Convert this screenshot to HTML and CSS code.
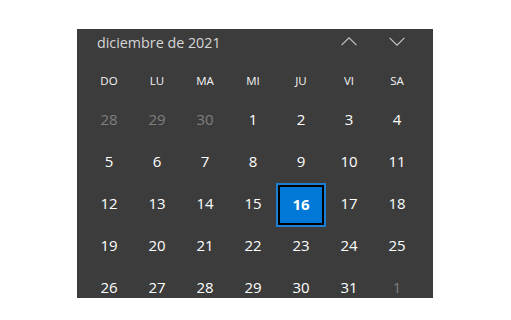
FILE: index.html
```html
<!DOCTYPE html>
<html lang="es">
<head>
<meta charset="utf-8">
<title>Calendario</title>
<link rel="stylesheet" href="styles.css">
</head>
<body>
<div class="page">
  <div class="calendar">
    <div class="header">
      <span class="title">diciembre de 2021</span>
      <div class="nav">
        <button class="nav-btn" aria-label="Mes anterior">
          <svg width="16" height="9" viewBox="0 0 16 9"><polyline points="0.6,8.2 8,0.8 15.4,8.2" fill="none" stroke="#c9c9c9" stroke-width="1.1"/></svg>
        </button>
        <button class="nav-btn" aria-label="Mes siguiente">
          <svg width="16" height="9" viewBox="0 0 16 9"><polyline points="0.6,0.8 8,8.2 15.4,0.8" fill="none" stroke="#c9c9c9" stroke-width="1.1"/></svg>
        </button>
      </div>
    </div>
    <div class="grid weekdays">
      <span>DO</span><span>LU</span><span>MA</span><span>MI</span><span>JU</span><span>VI</span><span>SA</span>
    </div>
    <div class="grid days">
      <span class="day out">28</span><span class="day out">29</span><span class="day out">30</span><span class="day">1</span><span class="day">2</span><span class="day">3</span><span class="day">4</span>
      <span class="day">5</span><span class="day">6</span><span class="day">7</span><span class="day">8</span><span class="day">9</span><span class="day">10</span><span class="day">11</span>
      <span class="day">12</span><span class="day">13</span><span class="day">14</span><span class="day">15</span><span class="day today"><span class="today-box">16</span></span><span class="day">17</span><span class="day">18</span>
      <span class="day">19</span><span class="day">20</span><span class="day">21</span><span class="day">22</span><span class="day">23</span><span class="day">24</span><span class="day">25</span>
      <span class="day">26</span><span class="day">27</span><span class="day">28</span><span class="day">29</span><span class="day">30</span><span class="day">31</span><span class="day out">1</span>
    </div>
  </div>
</div>
</body>
</html>
```
FILE: styles.css
```css
html, body {
  margin: 0;
  padding: 0;
  background: #ffffff;
}

.page {
  padding: 29px 0 0 77px;
}

.calendar {
  width: 356px;
  height: 269px;
  overflow: hidden;
  background: #3c3c3c;
  font-family: "Open Sans", "Noto Sans", sans-serif;
  color: #ffffff;
}

.header {
  height: 28px;
  display: flex;
  align-items: center;
  justify-content: space-between;
  padding: 0 12px 0 20px;
}

.title {
  font-size: 14.3px;
  color: #d6d6d6;
  line-height: 20px;
}

.nav {
  display: flex;
  height: 28px;
}

.nav-btn {
  width: 48px;
  height: 28px;
  padding: 0 0 3px 0;
  margin: 0;
  border: 0;
  background: transparent;
  display: flex;
  align-items: center;
  justify-content: center;
}

.nav-btn svg {
  display: block;
}

.grid {
  display: grid;
  grid-template-columns: repeat(7, 48px);
  padding-left: 8px;
}

.weekdays {
  padding-top: 7px;
  height: 34px;
  align-items: center;
  font-size: 11.5px;
  color: #f4f4f4;
}

.weekdays span {
  text-align: center;
  line-height: 34px;
}

.days {
  grid-auto-rows: 42px;
  font-size: 15px;
}

.day {
  display: flex;
  align-items: center;
  justify-content: center;
  color: #ffffff;
}

.day.out {
  color: #7f7f7f;
}

.day.today {
  align-items: flex-start;
}

.today-box {
  box-sizing: border-box;
  width: 46px;
  height: 40px;
  margin-top: 3px;
  padding-bottom: 3px;
  display: flex;
  align-items: center;
  justify-content: center;
  background: #0078d7;
  border: 2px solid #000000;
  box-shadow: 0 0 0 2px #1b7fd3;
  font-weight: 700;
  color: #ffffff;
}
```
